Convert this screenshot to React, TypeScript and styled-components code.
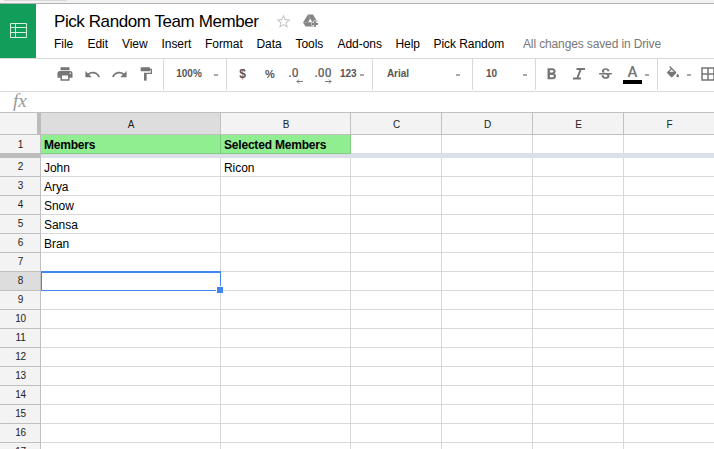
import React from "react";
import styled, { createGlobalStyle, css } from "styled-components";
import {
  MdPrint,
  MdUndo,
  MdRedo,
  MdFormatPaint,
  MdFormatBold,
  MdStrikethroughS,
  MdBorderAll,
  MdStarBorder,
} from "react-icons/md";

const GlobalStyle = createGlobalStyle`
  * { box-sizing: border-box; }
  body {
    margin: 0;
    overflow: hidden;
    background: #fff;
    font-family: "Liberation Sans", Arial, sans-serif;
    color: #000;
  }
`;

const Page = styled.div`
  width: 714px;
  height: 449px;
  overflow: hidden;
  display: flex;
  flex-direction: column;
`;

const TopStrip = styled.div`
  flex: none;
  height: 4px;
  background: #f2f2f2;
  border-bottom: 1px solid #b2b2b2;
  &::before {
    content: "";
    display: block;
    width: 63px;
    height: 1px;
    margin-left: 4px;
    background: #d8d8d8;
  }
`;

const Header = styled.header`
  flex: none;
  display: flex;
  height: 54px;
`;

const Logo = styled.div`
  flex: none;
  width: 36px;
  height: 54px;
  padding: 19px 0 0 10px;
  background: #129e5a;
  svg { display: block; }
`;

const HeaderBody = styled.div`
  flex: 1;
  padding-left: 18px;
`;

const TitleRow = styled.div`
  display: flex;
  height: 31px;
  padding-top: 6px;
`;

const Title = styled.h1`
  margin: 0;
  flex: none;
  width: 221px;
  font-size: 17px;
  font-weight: 400;
  line-height: 23px;
  letter-spacing: -0.42px;
  white-space: nowrap;
`;

const TitleIcon = styled.span<{ $w: number }>`
  flex: none;
  width: ${(p) => p.$w}px;
  height: 20px;
  padding-top: 3px;
  svg { display: block; }
`;

const Menu = styled.nav`
  display: flex;
  font-size: 12px;
  line-height: 18px;
  white-space: nowrap;
`;

const MenuItem = styled.span<{ $w: number; $muted?: boolean }>`
  flex: none;
  width: ${(p) => p.$w}px;
  letter-spacing: ${(p) => (p.$muted ? -0.13 : -0.05)}px;
  color: ${(p) => (p.$muted ? "#777" : "#000")};
`;

const Toolbar = styled.div`
  flex: none;
  display: flex;
  height: 34px;
  padding-left: 51px;
  border-top: 1px solid #d9d9d9;
  border-bottom: 1px solid #d9d9d9;
  color: #757575;
`;

const Group = styled.div<{ $w: number; $last?: boolean }>`
  flex: none;
  display: flex;
  width: ${(p) => p.$w}px;
  height: 31px;
  ${(p) => !p.$last && css`border-right: 1px solid #d9d9d9;`}
`;

const Tool = styled.span<{ $w: number; $start?: boolean }>`
  flex: none;
  width: ${(p) => p.$w}px;
  height: 30px;
  display: flex;
  align-items: center;
  justify-content: ${(p) => (p.$start ? "flex-start" : "center")};
  svg { flex: none; display: block; }
`;

const Label = styled.span<{ $size?: number }>`
  font-size: ${(p) => p.$size ?? 10}px;
  font-weight: 700;
  line-height: 14px;
  color: #555;
  white-space: nowrap;
`;

const Caret = styled.i`
  flex: none;
  width: 4px;
  height: 2px;
  margin-top: 15px;
  background: #a8a8a8;
`;

const Decimal = styled.span<{ $pad: number }>`
  flex: none;
  display: flex;
  flex-direction: column;
  align-items: flex-end;
  width: 18px;
  height: 20px;
  font-family: Roboto, sans-serif;
  font-size: 12px;
  font-weight: 500;
  line-height: 15px;
  margin-top: 4px;
  color: #666;
  span { margin-right: ${(p) => p.$pad}px; }
  svg { margin-top: -2px; }
`;

const TextColor = styled.span`
  display: flex;
  flex-direction: column;
  align-items: center;
  width: 19px;
  margin-top: 0;
  border-bottom: 4px solid #000;
  font: 500 15px/16px Roboto, sans-serif;
`;

const FormulaBar = styled.div`
  flex: none;
  height: 20px;
  padding-left: 13px;
  font: italic 19px/17px "Liberation Serif", serif;
  color: #999;
`;

const Sheet = styled.div`
  flex: none;
  border-top: 1px solid #c0c0c0;
`;

const Row = styled.div<{ $h: number }>`
  display: grid;
  grid-template-columns: 41px 180px 130px 91px 91px 91px 91px;
  grid-template-rows: ${(p) => p.$h}px;
  height: ${(p) => p.$h}px;
`;

const headCell = css`
  display: flex;
  align-items: center;
  justify-content: center;
  border-right: 1px solid #c0c0c0;
  border-bottom: 1px solid #c0c0c0;
  font-size: 10px;
  line-height: 12px;
  letter-spacing: -0.3px;
  color: #222;
`;

const Corner = styled.div`
  background: #f3f3f3;
  border-right: 4px solid #bcbcbc;
  border-bottom: 1px solid #c0c0c0;
`;

const ColHead = styled.div<{ $on?: boolean }>`
  ${headCell}
  padding: 2px 0 0 1px;
  background: ${(p) => (p.$on ? "#dddddd" : "#f3f3f3")};
`;

const RowHead = styled.div<{ $on?: boolean; $frozen?: boolean }>`
  ${headCell}
  padding-left: 1px;
  background: ${(p) => (p.$on ? "#dddddd" : "#f3f3f3")};
  ${(p) => p.$frozen && css`border-bottom-color: #bcbcbc; padding-top: 1px;`}
`;

const Cell = styled.div<{ $head?: boolean; $green?: boolean }>`
  position: relative;
  padding: 1px 0 0 3px;
  border-right: 1px solid #d9d9d9;
  border-bottom: 1px solid ${(p) => (p.$head ? "#dadfe8" : "#d9d9d9")};
  font-size: 12px;
  line-height: 18px;
  letter-spacing: -0.05px;
  white-space: nowrap;
  ${(p) =>
    p.$green &&
    css`
      background: #90ee90;
      border-color: #7ccd7c;
      font-weight: 700;
      letter-spacing: -0.2px;
    `}
`;

const Selection = styled.div`
  position: absolute;
  z-index: 1;
  inset: -1px -1px -1px 0;
  border: 1px solid #4285f4;
  border-top-width: 2px;
  &::after {
    content: "";
    position: absolute;
    right: -3px;
    bottom: -3px;
    width: 6px;
    height: 6px;
    border: solid #fff;
    border-width: 1px 0 0 1px;
    background: #4285f4;
  }
`;

const FreezeBar = styled.div`
  height: 4px;
  background: #dadfe8;
  border-left: 41px solid #bcbcbc;
`;

const menu = [
  { text: "File", w: 33.5 },
  { text: "Edit", w: 34.5 },
  { text: "View", w: 39.5 },
  { text: "Insert", w: 43.5 },
  { text: "Format", w: 51.5 },
  { text: "Data", w: 39 },
  { text: "Tools", w: 42 },
  { text: "Add-ons", w: 58 },
  { text: "Help", w: 38 },
  { text: "Pick Random", w: 89.5 },
];

const columns = ["A", "B", "C", "D", "E", "F"];
const members = ["John", "Arya", "Snow", "Sansa", "Bran"];
const SELECTED_ROW = 8;

function Arrow({ right }: { right?: boolean }) {
  return (
    <svg width="7" height="5" viewBox="0 0 7 5" fill="none" stroke="#777">
      <path d={right ? "M0 2.5H6M4 .5L6 2.5L4 4.5" : "M7 2.5H1M3 .5L1 2.5L3 4.5"} />
    </svg>
  );
}

function BodyRow({ n }: { n: number }) {
  return (
    <Row $h={19}>
      <RowHead $on={n === SELECTED_ROW}>{n}</RowHead>
      {columns.map((c) => (
        <Cell key={c}>
          {c === "A" && members[n - 2]}
          {c === "B" && n === 2 && "Ricon"}
          {c === "A" && n === SELECTED_ROW && <Selection />}
        </Cell>
      ))}
    </Row>
  );
}

export default function App() {
  return (
    <Page>
      <GlobalStyle />
      <TopStrip />
      <Header>
        <Logo>
          <svg width="17" height="15" viewBox="0 0 17 15" fill="none" stroke="#d5f0e1">
            <path d="M.5 .5h16v14H.5zM.5 4.5h16M.5 9.5h16M5.5 .5v14" />
          </svg>
        </Logo>
        <HeaderBody>
          <TitleRow>
            <Title>Pick Random Team Member</Title>
            <TitleIcon $w={28}>
              <MdStarBorder size={17} color="#cacaca" />
            </TitleIcon>
            <TitleIcon $w={18}>
              <svg width="16" height="15" viewBox="0 0 16 15">
                <path d="M5 1.500h5l4.500 7.500-2.500 4.500H2.500L0 9.500z" fill="#858585" />
                <path d="M7.200 5.500L9.200 9.200H5.200z" fill="#fff" />
                <path d="M5 2l2.300 4M0 9.500h5" stroke="#aaa" strokeWidth=".6" />
                <path d="M12 7.500v7M8.500 11h7" stroke="#fff" strokeWidth="3" />
                <path d="M12 8v6M9 11h6" stroke="#858585" strokeWidth="1.800" />
              </svg>
            </TitleIcon>
          </TitleRow>
          <Menu>
            {menu.map((m) => (
              <MenuItem key={m.text} $w={m.w}>{m.text}</MenuItem>
            ))}
            <MenuItem $w={150} $muted>All changes saved in Drive</MenuItem>
          </Menu>
        </HeaderBody>
      </Header>
      <Toolbar>
        <Group $w={113}>
          <Tool $w={28}><MdPrint size={18} /></Tool>
          <Tool $w={27}><MdUndo size={17} /></Tool>
          <Tool $w={27}><MdRedo size={17} /></Tool>
          <Tool $w={26}><MdFormatPaint size={16} /></Tool>
        </Group>
        <Group $w={63}>
          <Tool $w={50}><Label>100%</Label></Tool>
          <Caret />
        </Group>
        <Group $w={146}>
          <Tool $w={31}><Label $size={12}>$</Label></Tool>
          <Tool $w={24}><Label $size={11}>%</Label></Tool>
          <Tool $w={23}><Decimal $pad={4}><span>.0</span><Arrow /></Decimal></Tool>
          <Tool $w={35}><Decimal $pad={0}><span>.00</span><Arrow right /></Decimal></Tool>
          <Tool $w={20} $start><Label>123</Label></Tool>
          <Caret />
        </Group>
        <Group $w={100}>
          <Tool $w={50}><Label>Arial</Label></Tool>
          <Tool $w={33} />
          <Caret />
        </Group>
        <Group $w={63}>
          <Tool $w={37}><Label>10</Label></Tool>
          <Tool $w={13} />
          <Caret />
        </Group>
        <Group $w={122}>
          <Tool $w={31}><MdFormatBold size={19} /></Tool>
          <Tool $w={24}>
            <svg width="12" height="12" viewBox="0 0 12 12" fill="none" stroke="currentColor" strokeWidth="2">
              <path d="M3.500 1H12M0 10.500H8M7.800 1L4.200 10.500" />
            </svg>
          </Tool>
          <Tool $w={29}><MdStrikethroughS size={17} /></Tool>
          <Tool $w={25}><TextColor>A</TextColor></Tool>
          <Caret />
        </Group>
        <Group $w={60} $last>
          <Tool $w={29}>
            <svg width="16" height="16" viewBox="0 0 24 24" fill="currentColor">
              <path d="M16.560 8.940L7.620 0 6.210 1.410l2.380 2.380-5.150 5.150a1.490 1.490 0 0 0 0 2.120l5.500 5.500c.29.29.68.44 1.060.44s.77-.15 1.060-.44l5.500-5.500c.59-.58.59-1.530 0-2.120zM6.500 8.700L10 5.210 13.500 8.700zM19 11.500s-2 2.170-2 3.500a2 2 0 0 0 4 0c0-1.330-2-3.500-2-3.500z" />
            </svg>
          </Tool>
          <Caret />
          <Tool $w={33}><MdBorderAll size={18} /></Tool>
        </Group>
      </Toolbar>
      <FormulaBar>fx</FormulaBar>
      <Sheet>
        <Row $h={22}>
          <Corner />
          {columns.map((c) => (
            <ColHead key={c} $on={c === "A"}>{c}</ColHead>
          ))}
        </Row>
        <Row $h={19}>
          <RowHead $frozen>1</RowHead>
          <Cell $head $green>Members</Cell>
          <Cell $head $green>Selected Members</Cell>
          {columns.slice(2).map((c) => (
            <Cell key={c} $head />
          ))}
        </Row>
        <FreezeBar />
        {Array.from({ length: 16 }, (_, i) => (
          <BodyRow key={i} n={i + 2} />
        ))}
      </Sheet>
    </Page>
  );
}
